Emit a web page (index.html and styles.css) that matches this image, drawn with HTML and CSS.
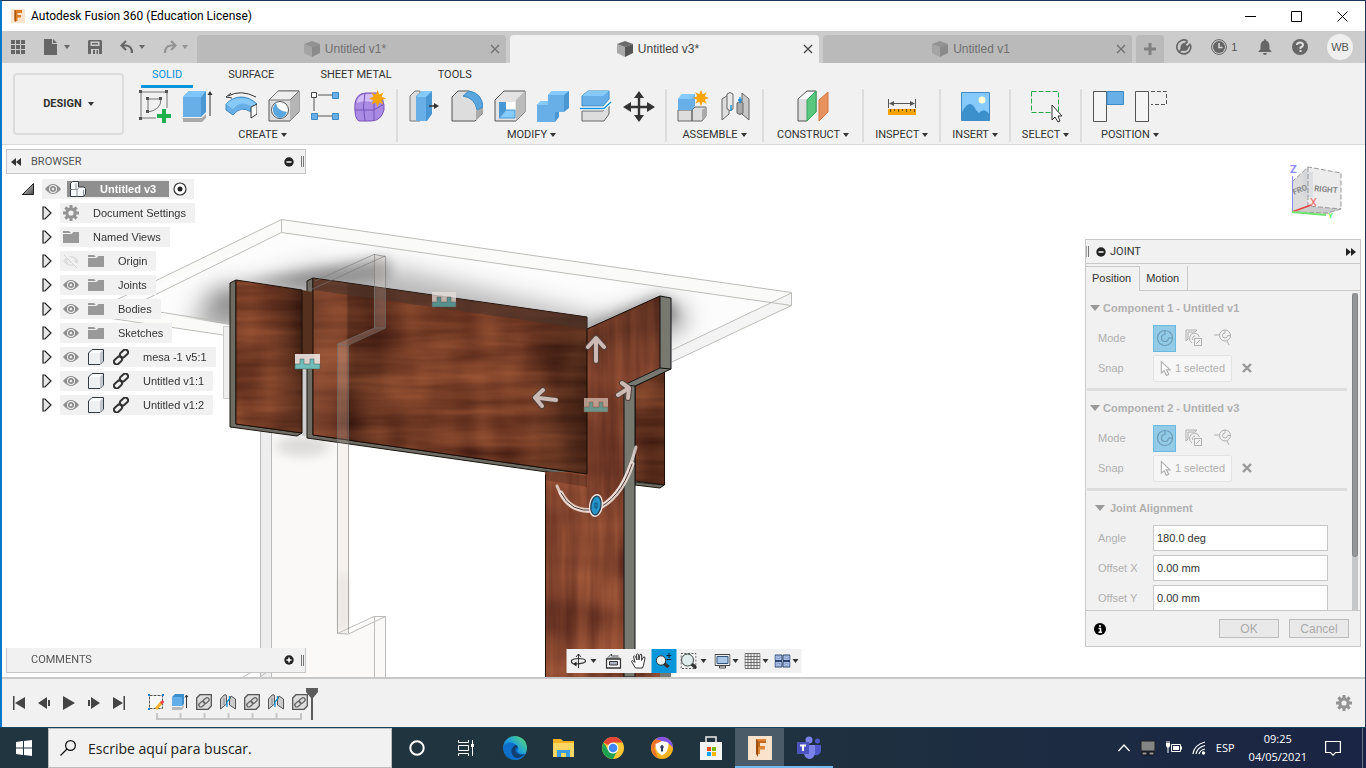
FILE: index.html
```html
<!DOCTYPE html>
<html lang="es">
<head>
<meta charset="utf-8">
<title>Autodesk Fusion 360 (Education License)</title>
<link rel="stylesheet" href="styles.css">
</head>
<body>
<svg class="defs" width="0" height="0" aria-hidden="true">
  <defs>
    <linearGradient id="gTri" x1="0" y1="0" x2="1" y2="1"><stop offset="0" stop-color="#eee"/><stop offset="1" stop-color="#444"/></linearGradient>
    <linearGradient id="gEdge" x1="0" y1="1" x2="1" y2="0"><stop offset="0" stop-color="#0c59a4"/><stop offset=".5" stop-color="#1b9de2"/><stop offset="1" stop-color="#5fe06a"/></linearGradient>
  </defs>
  <symbol id="eye" viewBox="0 0 16 16"><path d="M0 8Q8-2 16 8Q8 18 0 8Z" fill="#8f8f8f"/><circle cx="8" cy="8" r="4" fill="#f1f1f1"/><circle cx="8" cy="8" r="3" fill="#8f8f8f"/><circle cx="8" cy="8" r="1.2" fill="#f1f1f1"/></symbol>
  <symbol id="eyeoff" viewBox="0 0 16 16"><path d="M0 8Q8-2 16 8Q8 18 0 8Z" fill="#ddd"/><circle cx="8" cy="8" r="3.500" fill="#f1f1f1"/><circle cx="8" cy="8" r="2" fill="#ddd"/><path d="M2 1L15 14" stroke="#f1f1f1" stroke-width="3"/><path d="M1 2L14 15" stroke="#d5d5d5"/></symbol>
  <symbol id="folder" viewBox="0 0 16 16"><path d="M0 2H6L8 4H0ZM0 5H8.500L10.500 3H16V14H0Z" fill="#999"/></symbol>
  <symbol id="gear" viewBox="0 0 16 16"><g fill="#949494"><path d="M6.500 0h3v16h-3zM0 6.500h16v3H0z"/><path d="M6.500 0h3v16h-3zM0 6.500h16v3H0z" transform="rotate(45 8 8)"/><circle cx="8" cy="8" r="5.800"/></g><circle cx="8" cy="8" r="2.600" fill="#f1f1f1"/></symbol>
  <symbol id="cube" viewBox="0 0 16 16"><path d="M.5 4L4 .5H15.500V12L12 15.500H.5Z" fill="#fff" stroke="#333b45"/><path d="M12 4L15 1V12L12 15Z" fill="#c5c8cf"/><path d="M1 4H12V15H1Z" fill="#eef0f4"/></symbol>
  <symbol id="comps" viewBox="0 0 16 16"><path d="M.5 2.500L2.500.5H8.500V6H14L15.500 7.500V13L13.500 15.500H.5Z" fill="#f7f8fa" stroke="#333b45"/><path d="M.5 8.500H7V15.500M6 2.500V8M7 9L9 6.500M13.500 9V15" fill="none" stroke="#8f969e"/></symbol>
  <symbol id="link" viewBox="0 0 16 16"><g fill="none" stroke="#333" stroke-width="2"><rect x="6.500" y="1.800" width="9" height="5.400" rx="2.700" transform="rotate(-42 11 4.500)"/><rect x=".5" y="8.800" width="9" height="5.400" rx="2.700" transform="rotate(-42 5 11.500)"/></g></symbol>
  <symbol id="play" viewBox="0 0 10 14"><path d="M1 1V13H3L9 7L3 1Z" fill="#e6e6e6" stroke="#222" stroke-width="1.200"/></symbol>
  <symbol id="doccube" viewBox="0 0 16 16"><path d="M0 3L8 0L16 3L8 6Z" opacity=".85"/><path d="M0 3L8 6V16L0 12Z" opacity=".45"/><path d="M8 6L16 3V12L8 16Z"/></symbol>
  <symbol id="close" viewBox="0 0 10 10"><path d="M1 1L9 9M9 1L1 9" stroke="currentColor" stroke-width="1.300"/></symbol>
  <symbol id="jm1" viewBox="0 0 18 18"><path d="M9 1.500A7.500 7.500 0 1 0 16.500 9H12.500A3.500 3.500 0 1 1 9 5.500ZM9 1.500A7.500 7.500 0 0 1 16.500 9" fill="none" stroke="currentColor" stroke-width="1.200"/></symbol>
  <symbol id="jm2" viewBox="0 0 18 18"><g fill="none" stroke="currentColor"><path d="M1 12V1H12L10 3H3V10Z"/><path d="M9 4A5.500 5.500 0 0 0 7 14M9 4A6 6 0 0 1 14.500 8"/><path d="M10 7A2.500 2.500 0 0 0 8 11"/><rect x="9.500" y="9.500" width="7" height="7"/><path d="M11 15L15 11"/></g></symbol>
  <symbol id="jm3" viewBox="0 0 18 18"><path d="M0 6H5M11 1A5.500 5.500 0 1 0 16.500 6.500H13.500A2.500 2.500 0 1 1 11 4ZM11 1A5.500 5.500 0 0 1 16.500 6.500M13 12L15 16" fill="none" stroke="currentColor"/></symbol>
  <symbol id="cursor" viewBox="0 0 12 18"><path d="M1.500 1.500V14L4.500 11.500L7 16.500L9.500 15.300L7 10.500H11Z" fill="#fff" stroke="currentColor" stroke-width="1.300"/></symbol>
  <symbol id="tlink" viewBox="0 0 16 16"><path d="M.7 4L4 .7H15.300V12L12 15.300H.7Z" fill="#ddd" stroke="#555" stroke-width="1.300"/><g fill="none" stroke="#666" stroke-width="1.300"><rect x="6.500" y="4.500" width="6.500" height="4" rx="2" transform="rotate(-40 10 6)"/><rect x="2.500" y="8" width="6.500" height="4" rx="2" transform="rotate(-40 6 10)"/></g></symbol>
  <symbol id="joint" viewBox="0 0 32 32"><g stroke="#666" fill="#ddd"><path d="M2 9L9 4.500V24L2 30Z"/><path d="M7 4Q10 1 13 4V19Q10 22 7 19Z" fill="#e9e9e9"/><path d="M22 3L29 9V30L22 24Z" fill="#c8c8c8"/><path d="M17 13Q20 10 23 13V23Q20 26 17 23Z" fill="#aaa"/></g><path d="M11 15V21M20 7V13M18 10H22" stroke="#0a8ede" stroke-width="1.300"/></symbol>
  <symbol id="tjoint" viewBox="0 0 16 16"><g stroke="#555" fill="#ccc"><path d="M.5 5L4 1Q6.500 0 6.500 2V10L.5 15Z"/><path d="M9.500 6L11 2L15.500 5V15L9.500 11Z"/></g><path d="M4 4V11" stroke="#888"/><path d="M7 13V8L9.500 5V2" fill="none" stroke="#0a8ede" stroke-width="1.300"/></symbol>
  <symbol id="star" viewBox="0 0 16 16"><path d="M8 0L9.700 4.200L13.700 2.300L11.800 6.300L16 8L11.800 9.700L13.700 13.700L9.700 11.800L8 16L6.300 11.800L2.300 13.700L4.200 9.700L0 8L4.200 6.300L2.300 2.300L6.300 4.200Z" fill="#f7a400"/></symbol>
</svg>

<div class="app">
  <header class="titlebar">
    <svg class="ic14" viewBox="0 0 14 14"><rect width="14" height="14" fill="#fbe3cf"/><path d="M3.500 1H11V4H6.500V6H10V8.500H6.500V12H3.500Z" fill="#dd7c22"/><path d="M3.500 1L5 2V13L3.500 12Z" fill="#a9560e"/></svg>
    <h1>Autodesk Fusion 360 (Education License)</h1>
    <div class="wincontrols">
      <button aria-label="Minimize"><svg class="ic11" viewBox="0 0 11 11"><path d="M0 5.500H11" stroke="#000"/></svg></button>
      <button aria-label="Maximize"><svg class="ic11" viewBox="0 0 11 11"><path d="M.5.5H10.500V10.500H.5Z" fill="none" stroke="#000"/></svg></button>
      <button aria-label="Close"><svg class="ic11" viewBox="0 0 11 11"><path d="M.5.5L10.500 10.500M10.500.5L.5 10.500" stroke="#000"/></svg></button>
    </div>
  </header>

  <nav class="tabbar" aria-label="Documents">
    <div class="quick">
      <button aria-label="Data panel"><svg class="ic14" viewBox="0 0 14 14"><path d="M0 0h4v4H0zM5 0h4v4H5zM10 0h4v4h-4zM0 5h4v4H0zM5 5h4v4H5zM10 5h4v4h-4zM0 10h4v4H0zM5 10h4v4H5zM10 10h4v4h-4z" fill="#666"/></svg></button>
      <button aria-label="File"><svg class="ic16" viewBox="0 0 16 16"><path d="M1 0H9V5H14V16H1ZM10 0L14 4H10Z" fill="#666"/></svg><i class="caret"></i></button>
      <button aria-label="Save"><svg class="ic14" viewBox="0 0 14 14"><path d="M0 1L1 0H13L14 1V14H0Z" fill="#666"/><path d="M2.500 1.500H11.500V6H2.500ZM3 9H11V14H3Z" fill="#ccc"/><path d="M4 3H10V4.500H4ZM5 10H7V14H5ZM8.500 10H10V14H8.500Z" fill="#666"/></svg></button>
      <button aria-label="Undo"><svg class="ic14" viewBox="0 0 14 14"><path d="M6 1L1.500 5.500L6 10M2 5.500H6Q12 6 12 13" fill="none" stroke="#666" stroke-width="2.200"/></svg><i class="caret"></i></button>
      <button aria-label="Redo" class="dim"><svg class="ic14" viewBox="0 0 14 14"><path d="M8 1L12.500 5.500L8 10M12 5.500H8Q2 6 2 13" fill="none" stroke="#666" stroke-width="2.200"/></svg><i class="caret"></i></button>
    </div>
    <div class="doctabs">
      <div class="doctab"><svg class="ic16"><use href="#doccube"/></svg><a href="#t1">Untitled v1*</a><button aria-label="Close tab"><svg class="ic10"><use href="#close"/></svg></button></div>
      <div class="doctab on"><svg class="ic16"><use href="#doccube"/></svg><a href="#t2">Untitled v3*</a><button aria-label="Close tab"><svg class="ic10"><use href="#close"/></svg></button></div>
      <div class="doctab"><svg class="ic16"><use href="#doccube"/></svg><a href="#t3">Untitled v1</a><button aria-label="Close tab"><svg class="ic10"><use href="#close"/></svg></button></div>
      <button class="plus" aria-label="New tab"><svg class="ic14" viewBox="0 0 14 14"><path d="M7 1V13M1 7H13" stroke="#808080" stroke-width="3"/></svg></button>
    </div>
    <div class="account">
      <button aria-label="Extensions"><svg class="ic16" viewBox="0 0 16 16"><path d="M11.500 2A7 7 0 1 0 14.500 6" fill="none" stroke="#666" stroke-width="1.600"/><path d="M4.500 8Q5 4.500 8 4L12.500 8.500Q11.500 12 8 12Q6 12 4.500 10.500Z" fill="#666"/><path d="M8.500 5.500L11.500 2.500M11 8.500L14.500 5M2.500 13.500L6 10" stroke="#666" stroke-width="1.800"/></svg></button>
      <button aria-label="Job status"><svg class="ic16" viewBox="0 0 16 16"><circle cx="8" cy="8" r="7.400" fill="none" stroke="#666"/><circle cx="8" cy="8" r="6" fill="#666"/><path d="M8 4V8.500H11.500" fill="none" stroke="#ddd" stroke-width="1.500"/></svg><span>1</span></button>
      <button aria-label="Notifications"><svg class="ic16" viewBox="0 0 16 16"><path d="M8 0Q9 0 9 1.500Q12.500 2.500 12.500 7V10L14.500 12.500V13H1.500V12.500L3.500 10V7Q3.500 2.500 7 1.500Q7 0 8 0ZM6 14H10Q10 16 8 16Q6 16 6 14Z" fill="#666"/></svg></button>
      <button aria-label="Help"><svg class="ic16" viewBox="0 0 16 16"><circle cx="8" cy="8" r="8" fill="#666"/><path d="M5 6Q5 3.500 8 3.500Q11 3.500 11 6Q11 7.500 8.500 8.500V10M8.500 11V13" fill="none" stroke="#ddd" stroke-width="2"/></svg></button>
      <button class="avatar">WB</button>
    </div>
  </nav>

  <section class="ribbon">
    <button class="workspace">DESIGN <i class="caret"></i></button>
    <div class="ribbon-main">
      <div class="rtabs"><a class="on" href="#solid">SOLID</a><a href="#surface">SURFACE</a><a href="#sheet">SHEET METAL</a><a href="#tools">TOOLS</a></div>
      <div class="groups">
        <div class="group"><div class="icons">
          <button aria-label="Create sketch"><svg viewBox="0 0 32 32"><path d="M2 2H28M2 2V28M28 2V18M2 28H17M9 9H22M9 9V22M22 9Q22 20 9 22" fill="none" stroke="#555" stroke-width=".8"/><path d="M0 0h3v3H0zM26 0h3v3h-3zM0 27h3v3H0zM7 7h3v3H7zM20 7h3v3h-3zM7 20h3v3H7z" fill="#555"/><path d="M23 19h4v5h5v4h-5v5h-4v-5h-5v-4h5z" fill="#22b04c"/></svg></button>
          <button aria-label="Extrude"><svg viewBox="0 0 32 32"><path d="M1 28H20L24 24V28L20 32H1Z" fill="#aaa"/><path d="M1 7L7 1H24V22L19 27H1Z" fill="#4a98d3"/><path d="M1 7L7 1H24L19 7Z" fill="#7fc5fa"/><path d="M1 7H19V27H1Z" fill="#68afe7"/><path d="M28 26V4" stroke="#333"/><path d="M25.500 5L28 1L30.500 5Z" fill="#333"/></svg></button>
          <button aria-label="Revolve"><svg viewBox="0 0 32 32"><path d="M1 14Q8 7 16 7Q25 7 32 14L26 22Q16 15 8 25L1 20Z" fill="#68afe7" stroke="#3e8ac5"/><path d="M1 14Q8 8 16 8Q25 8 31 14L27 17Q16 9 8 19Z" fill="#86c9fb"/><path d="M26 17L32 14V24L26 28Z" fill="#fff" stroke="#333"/><path d="M3 6Q16-1 31 7M6 3L1 7L7 8" fill="none" stroke="#333"/></svg></button>
          <button aria-label="Hole"><svg viewBox="0 0 32 32"><path d="M1 10L10 1H31V22L22 31H1Z" fill="#ddd" stroke="#555"/><path d="M22 10L31 1V22L22 31Z" fill="#b5b5b5"/><path d="M1 10L10 1H31L22 10Z" fill="#eee" stroke="#777"/><circle cx="12" cy="20" r="8.500" fill="#fff" stroke="#555"/><path d="M8 13Q9 21 19 22Q17 28 11 28Q4 25 5 18Q6 15 8 13Z" fill="#5aa6de"/></svg></button>
          <button aria-label="Pattern"><svg viewBox="0 0 32 32"><path d="M7 5H22M3 8V21M7 26H22" stroke="#555"/><path d="M.5 2.500h5v5h-5z" fill="#fff" stroke="#444"/><path d="M21.500 2.500h6v6h-6zM21.500 23.500h6v6h-6zM.5 23.500h6v6h-6z" fill="#68afe7" stroke="#3e8ac5"/></svg></button>
          <button aria-label="Form"><svg viewBox="0 0 32 32"><path d="M1 13Q3 3 12 3H23Q31 9 30 20Q27 31 17 31H5Q0 29 1 13Z" fill="#a98be3" stroke="#7652b8"/><path d="M3 11Q5 4 14 4H22L18 12Q9 10 3 13Z" fill="#d2bdf8"/><path d="M1 20H20L30 14M11 3Q8 17 11 31M20 12V30" fill="none" stroke="#7652b8"/><use href="#star" x="15" y="0" width="17" height="17"/></svg></button>
        </div><button class="glabel">CREATE <i class="caret"></i></button></div>
        <div class="group"><div class="icons">
          <button aria-label="Press pull"><svg viewBox="0 0 32 32"><path d="M2 6L7 1H12V31H2Z" fill="#ddd" stroke="#777"/><path d="M8 6L14 1H24V24L19 31H8Z" fill="#4a98d3"/><path d="M8 7H18V31H8Z" fill="#68afe7"/><path d="M8 7L14 1H24L18 7Z" fill="#86c9fb"/><path d="M21 16H27" stroke="#333" stroke-width="1.500"/><path d="M26 13L31 16L26 19Z" fill="#333"/></svg></button>
          <button aria-label="Fillet"><svg viewBox="0 0 32 32"><path d="M1 7L7 1H18L31 16V24L24 31H1Z" fill="#ddd" stroke="#555"/><path d="M25 21L31 16V24L25 31Z" fill="#aaa"/><path d="M12 6L18 1Q31 3 32 17L26 20Q24 8 12 6Z" fill="#5aa6de" stroke="#3e8ac5"/></svg></button>
          <button aria-label="Shell"><svg viewBox="0 0 32 32"><path d="M1 10L10 1H31V22L22 31H1Z" fill="#e3e3e3" stroke="#555"/><path d="M22 10L31 1V22L22 31Z" fill="#bbb"/><path d="M5 12H21V28H5Z" fill="#fff"/><path d="M5 12H12V21L5 28Z" fill="#4a98d3"/><path d="M12 20H21V28H5Z" fill="#86c9fb" stroke="#4a98d3"/></svg></button>
          <button aria-label="Combine"><svg viewBox="0 0 32 32"><path d="M11 5L15 1H32V18L27 22H22V27L18 32H0V15L4 11H11Z" fill="#4a98d3"/><path d="M11 5H27V22H18V32H0V15H11Z" fill="#68afe7"/><path d="M11 5L15 1H32L27 5ZM0 15L4 11H11V15Z" fill="#86c9fb"/></svg></button>
          <button aria-label="Split body"><svg viewBox="0 0 32 32"><path d="M2 6L8 1H29V9L23 16H2Z" fill="#68afe7" stroke="#3e8ac5"/><path d="M2 6L8 1H29L23 6Z" fill="#86c9fb"/><path d="M2 21H23L29 14V24L24 31H2Z" fill="#ddd" stroke="#666"/><path d="M0 18.500H24L31 12" fill="none" stroke="#fff" stroke-width="3.500"/><path d="M0 18.500H24L31 12" fill="none" stroke="#0a8ede" stroke-width="1.300"/></svg></button>
          <button aria-label="Move"><svg viewBox="0 0 32 32"><path d="M16 5V28M5 17H28" stroke="#333" stroke-width="2.400"/><path d="M11 8L16 1L21 8ZM11 25L16 32L21 25ZM8 12L0 17L8 22ZM24 12L32 17L24 22Z" fill="#333"/></svg></button>
        </div><button class="glabel">MODIFY <i class="caret"></i></button></div>
        <div class="group"><div class="icons">
          <button aria-label="New component"><svg viewBox="0 0 32 32"><path d="M1 20H15V31H1ZM15 20L18 17H29V26L25 31H15Z" fill="#ddd" stroke="#666"/><path d="M25 20L29 17V26L25 31Z" fill="#aaa"/><path d="M1 9L5 4H18V16L15 20H1Z" fill="#68afe7"/><path d="M1 9L5 4H18L15 9Z" fill="#86c9fb"/><use href="#star" x="16" y="0" width="16" height="16"/></svg></button>
          <button aria-label="Joint"><svg><use href="#joint"/></svg></button>
        </div><button class="glabel">ASSEMBLE <i class="caret"></i></button></div>
        <div class="group wide"><div class="icons">
          <button aria-label="Offset plane"><svg viewBox="0 0 32 32"><path d="M1 9L10 1H19V22L10 31H1Z" fill="#ddd" stroke="#555"/><path d="M2 9L10 2H17L10 9Z" fill="#fff"/><path d="M10 10L19 1V22L10 31Z" fill="#5bc67e" stroke="#35a65c"/><path d="M22 10L31 2V22L22 31Z" fill="#e8935f" stroke="#d1763f"/></svg></button>
        </div><button class="glabel">CONSTRUCT <i class="caret"></i></button></div>
        <div class="group text"><div class="icons">
          <button aria-label="Measure"><svg viewBox="0 0 32 32"><path d="M2.500 9V18M29.500 9V18M4 13.500H28" stroke="#555"/><path d="M8 11L3 13.500L8 16ZM24 11L29 13.500L24 16Z" fill="#555"/><path d="M2 19H30V25H2Z" fill="#f9a400"/><path d="M4.500 19v3M8.500 19v2M12.500 19v3M16.500 19v2M20.500 19v3M24.500 19v2M28.500 19v3" stroke="#765000"/></svg></button>
        </div><button class="glabel">INSPECT <i class="caret"></i></button></div>
        <div class="group text"><div class="icons">
          <button aria-label="Insert image"><svg viewBox="0 0 32 32"><path d="M2.500 2.500H30.500V30.500H2.500Z" fill="#86c9fb" stroke="#3e8ac5"/><path d="M3 22Q11 7 17 20L20 23Q25 17 30 24V30H3Z" fill="#3c91cc"/><circle cx="23" cy="10" r="3.500" fill="#fffbd5"/></svg></button>
        </div><button class="glabel">INSERT <i class="caret"></i></button></div>
        <div class="group text"><div class="icons">
          <button aria-label="Select"><svg viewBox="0 0 32 32"><path d="M1.500 1.500H28.500V22.500H1.500Z" fill="none" stroke="#22a84a" stroke-dasharray="5 2"/><path d="M22 15V30L25 27L28 32L30 31L28 26H32Z" fill="#fff" stroke="#333"/></svg></button>
        </div><button class="glabel">SELECT <i class="caret"></i></button></div>
        <div class="group last"><div class="icons">
          <button aria-label="Capture position"><svg viewBox="0 0 32 32"><path d="M1.500 1.500H14.500V31.500H1.500Z" fill="#f5f5f5" stroke="#555"/><path d="M15 1.500H31.500V14.500H15Z" fill="#68afe7" stroke="#3e8ac5"/></svg></button>
          <button aria-label="Revert position"><svg viewBox="0 0 32 32"><path d="M.5 1.500H13.500V31.500H.5Z" fill="#f5f5f5" stroke="#555"/><path d="M16 1.500H31.500V14.500H16" fill="none" stroke="#555" stroke-dasharray="4 2"/></svg></button>
        </div><button class="glabel">POSITION <i class="caret"></i></button></div>
      </div>
    </div>
  </section>

  <main class="canvas">
    <svg class="scene" viewBox="2 145 1363 532" preserveAspectRatio="xMinYMin slice" aria-label="3D model of a table">
      <defs>
        <filter id="woodH" x="0" y="0" width="1" height="1" color-interpolation-filters="sRGB">
          <feTurbulence type="fractalNoise" baseFrequency=".007 .07" numOctaves="3" seed="4" result="a0"/>
          <feColorMatrix in="a0" values="1 0 0 0 0 0 1 0 0 0 0 0 1 0 0 0 0 0 0 1" result="a"/>
          <feTurbulence type="fractalNoise" baseFrequency=".025 .012" numOctaves="2" seed="9" result="b0"/>
          <feColorMatrix in="b0" values="1 0 0 0 0 0 1 0 0 0 0 0 1 0 0 0 0 0 0 1" result="b"/>
          <feComposite in="a" in2="b" operator="arithmetic" k2=".5" k3=".5"/>
          <feColorMatrix values=".65 0 0 0 .14  .42 0 0 0 .03  .26 0 0 0 .02  0 0 0 0 1"/>
          <feComposite in2="SourceAlpha" operator="in"/>
        </filter>
        <filter id="woodV" x="0" y="0" width="1" height="1" color-interpolation-filters="sRGB">
          <feTurbulence type="fractalNoise" baseFrequency=".08 .006" numOctaves="3" seed="7" result="a0"/>
          <feColorMatrix in="a0" values="1 0 0 0 0 0 1 0 0 0 0 0 1 0 0 0 0 0 0 1" result="a"/>
          <feTurbulence type="fractalNoise" baseFrequency=".012 .025" numOctaves="2" seed="3" result="b0"/>
          <feColorMatrix in="b0" values="1 0 0 0 0 0 1 0 0 0 0 0 1 0 0 0 0 0 0 1" result="b"/>
          <feComposite in="a" in2="b" operator="arithmetic" k2=".5" k3=".5"/>
          <feColorMatrix values=".65 0 0 0 .19  .42 0 0 0 .06  .26 0 0 0 .05  0 0 0 0 1"/>
          <feComposite in2="SourceAlpha" operator="in"/>
        </filter>
        <filter id="soft" x="-1" y="-1" width="3" height="3"><feGaussianBlur stdDeviation="12"/></filter>
        <filter id="soft2" x="-1" y="-1" width="3" height="3"><feGaussianBlur stdDeviation="6"/></filter>
        <clipPath id="under"><path d="M281 232L791 306L672 362H640L590 330L230 325L108 305Z"/></clipPath>
        <linearGradient id="shadeB" x1="0" y1="0" x2="1" y2="0"><stop offset="0" stop-color="#b06a4c" stop-opacity=".3"/><stop offset=".12" stop-color="#a05a3c" stop-opacity=".2"/><stop offset=".13" stop-color="#000" stop-opacity=".22"/><stop offset=".35" stop-color="#000" stop-opacity="0"/><stop offset=".75" stop-color="#000" stop-opacity="0"/><stop offset="1" stop-color="#000" stop-opacity=".4"/></linearGradient>
        <linearGradient id="shadeA" x1="0" y1="0" x2="1" y2="0"><stop offset=".5" stop-color="#000" stop-opacity="0"/><stop offset="1" stop-color="#000" stop-opacity=".35"/></linearGradient>
        <linearGradient id="shadeTop" x1="0" y1="0" x2="0" y2="1"><stop offset="0" stop-color="#000" stop-opacity=".3"/><stop offset=".4" stop-color="#000" stop-opacity="0"/></linearGradient>
      </defs>
      <path d="M281 219L791 292V306L672 362L640 380H230V336L108 318V304Z" fill="#fafaf9"/>
      <g clip-path="url(#under)">
        <path d="M281 232L791 306L672 362H640L590 330L230 325L108 305Z" fill="#fcfcfc"/>
        <g filter="url(#soft)">
          <path d="M200 300L310 268L395 268L600 318L670 300V340H190Z" opacity=".27"/>
          <ellipse cx="230" cy="300" rx="22" ry="12" opacity=".4"/><ellipse cx="672" cy="318" rx="16" ry="12" opacity=".35"/>
        </g>
        <g filter="url(#soft2)"><path d="M240 282L300 272L375 258L390 260L388 280L310 286Z" opacity=".28"/><path d="M585 325L660 293L676 305V320L590 335Z" opacity=".25"/></g>
      </g>
      <path d="M791 306L672 362V350L791 293Z" fill="#eee" opacity=".6"/>
      <path d="M108 304L281.500 219.500L791.500 292.500V305.500L672 362M281.500 219.500V232.500L791.500 305.500M281.500 232.500L108 318V304L230 323M108 318L230 336M791.500 293L672 350" fill="none" stroke="#bcbcb8"/>
      <path d="M223.500 326.500H230V398.500H223.500Z" fill="#eee" stroke="#ccc"/>
      <path d="M260 430H338V633L348 633L374 616L385 617V677H260Z" fill="#faf9f8"/>
      <path d="M260 430H271V677H260Z" fill="#eee"/>
      <ellipse cx="303" cy="446" rx="28" ry="10" filter="url(#soft2)" opacity=".12"/>
      <path d="M260.500 430V677M271.500 430V677M374.500 616V677M385.500 616V677M337.500 633.500L374 616.500L385.500 616.500L348.500 634ZM243 677L252 672M260 677L267 672" fill="none" stroke="#bbb"/>
      <path d="M302 366H308V436H302Z" fill="#cfcfcf"/>
      <g stroke="#181410" stroke-width="1">
        <path d="M230 283L236 280V424L302 433L297 436L230 427Z" fill="#6e6c62"/>
        <path d="M307 281L313 278V435L587 474L582 477L307 438Z" fill="#6e6c62"/>
      </g>
      <path d="M302 290L313 292V366L302 365Z" fill="#55301f"/>
      <path d="M236 280L302 290V433L236 424Z" filter="url(#woodH)"/>
      <path d="M236 280L302 290V433L236 424Z" fill="url(#shadeA)" stroke="#1c0f09"/>
      <path d="M545 472H624V677H545Z" filter="url(#woodV)"/>
      <path d="M587 329L660 296V368L624 385V490H587Z" filter="url(#woodV)"/>
      <path d="M587 329L660 296V368L624 385V490H587Z" fill="url(#shadeTop)"/>
      <path d="M635 386L664.500 372V485L635 481Z" filter="url(#woodH)"/>
      <path d="M635 386L664.500 372V485L635 481Z" fill="#000" fill-opacity=".15" stroke="#1c0f09"/>
      <path d="M635 482L664 485L660 488L635 485Z" fill="#6e6c62" stroke="#181410"/>
      <path d="M545 672H660V677H545Z" filter="url(#woodV)"/><path d="M660 672H671V677H660Z" fill="#777870"/>
      <path d="M660 296L671 298V369L635 386V677H624V385L660 368Z" fill="#777870" stroke="#111"/>
      <path d="M660 368L671 369M624 385L635 386" stroke="#111"/>
      <path d="M587 329L660 296M545.500 475V677" stroke="#170c06" fill="none"/>
      <path d="M545 470L587 476V487L545 480Z" opacity=".2"/>
      <path d="M313 278L587 317V474L313 435Z" filter="url(#woodH)"/>
      <path d="M313 278L587 317V474L313 435Z" fill="url(#shadeB)" stroke="#170c06"/>
      <path d="M313 278L587 317V329L313 290Z" fill="#4a342c" opacity=".6"/>
      <path d="M374 254L385 256V328L348 345V633H338V344L374 328Z" fill="#d8c8c0" opacity=".24"/>
      <path d="M315 281L374 254.500L385.500 256.500V328L348.500 345V633M374.500 254V328L337.500 344V633M374.500 328L385 328M338 344L348 345M308 291L385 256" fill="none" stroke="#777" opacity=".6"/>
      <path d="M341 575H346V628H341Z" fill="#888" opacity=".3" filter="url(#soft2)"/>
      <g>
        <path d="M432 292H456V307H432Z" fill="#e5dedb" opacity=".75"/><path d="M432 302H437V297H441V302H447V297H451V302H456V307H432Z" fill="#56918d" stroke="#69524c" stroke-width=".5"/>
        <path d="M295 354H320V369H295Z" fill="#eee6e3" opacity=".9"/><path d="M295 364H300V359H304V364H310V359H314V364H320V369H295Z" fill="#70bdb9" stroke="#43514f" stroke-width=".5"/>
        <path d="M584 398H608V412H584Z" fill="#d6bdb2" opacity=".75"/><path d="M584 407H589V402H593V407H599V402H603V407H608V412H584Z" fill="#6c958a" stroke="#8a4f3a" stroke-width=".5"/>
      </g>
      <g fill="none" stroke-linecap="round" stroke-linejoin="round">
        <path d="M596 361V339M588 347L596 338L604 347M556 400L535 397.500M543 390L535 397.500L542 406M618 395L629 388M622 383L629 388L628 398" stroke="#53403b" stroke-width="6"/>
        <path d="M596 361V339M588 347L596 338L604 347M556 400L535 397.500M543 390L535 397.500L542 406M618 395L629 388M622 383L629 388L628 398" stroke="#ccbab5" stroke-width="4"/>
        <path d="M557 486Q568 514 594 510Q622 500 636 447" stroke="#eee1dc" stroke-width="3" opacity=".8"/>
        <path d="M561 493Q571 513 594 510Q620 500 632 464" stroke="#eee1dc" stroke-width="5" opacity=".85"/>
        <path d="M561 493Q571 513 594 510Q620 500 632 464" stroke="#4f3d36" stroke-width="1"/>
      </g>
      <ellipse cx="596" cy="505.500" rx="5.500" ry="10" transform="rotate(8 596 505)" fill="#2592ca" stroke="#f0e5e1" stroke-width="3"/>
      <ellipse cx="596" cy="505.500" rx="5" ry="9.500" transform="rotate(8 596 505)" fill="#2592ca" stroke="#263d4c" stroke-width="1.300"/>
      <path d="M595 503H597V508H595Z" fill="none" stroke="#12557b"/>
    </svg>

    <aside class="browser">
      <div class="panelhead"><svg class="ic10" viewBox="0 0 10 10"><path d="M5 1V9L0 5ZM10 1V9L5 5Z" fill="#333"/></svg><h2>BROWSER</h2><button aria-label="Collapse browser"><svg class="ic10" viewBox="0 0 10 10"><circle cx="5" cy="5" r="4.700" fill="#222"/><path d="M2.500 5H7.500" stroke="#fff" stroke-width="1.500"/></svg></button><i class="grip"></i></div>
      <ul class="tree">
        <li class="root"><svg class="ic12" viewBox="0 0 12 12"><path d="M.5 11.500L11.500.5V11.500Z" fill="url(#gTri)" stroke="#222"/></svg><div class="node"><svg class="ic16"><use href="#eye"/></svg><span class="rootname"><svg class="ic16"><use href="#comps"/></svg><b>Untitled v3</b></span><svg class="ic14" viewBox="0 0 14 14"><circle cx="7" cy="7" r="6" fill="#fff" stroke="#333" stroke-width="1.200"/><circle cx="7" cy="7" r="2.500" fill="#222"/></svg></div></li>
        <li><svg class="tw"><use href="#play"/></svg><div class="node"><svg class="ic16"><use href="#gear"/></svg><span>Document Settings</span></div></li>
        <li><svg class="tw"><use href="#play"/></svg><div class="node"><svg class="ic16"><use href="#folder"/></svg><span>Named Views</span></div></li>
        <li><svg class="tw"><use href="#play"/></svg><div class="node"><svg class="ic16"><use href="#eyeoff"/></svg><svg class="ic16"><use href="#folder"/></svg><span>Origin</span></div></li>
        <li><svg class="tw"><use href="#play"/></svg><div class="node"><svg class="ic16"><use href="#eye"/></svg><svg class="ic16"><use href="#folder"/></svg><span>Joints</span></div></li>
        <li><svg class="tw"><use href="#play"/></svg><div class="node"><svg class="ic16"><use href="#eye"/></svg><svg class="ic16"><use href="#folder"/></svg><span>Bodies</span></div></li>
        <li><svg class="tw"><use href="#play"/></svg><div class="node"><svg class="ic16"><use href="#eye"/></svg><svg class="ic16"><use href="#folder"/></svg><span>Sketches</span></div></li>
        <li><svg class="tw"><use href="#play"/></svg><div class="node"><svg class="ic16"><use href="#eye"/></svg><svg class="ic16"><use href="#cube"/></svg><svg class="ic16"><use href="#link"/></svg><span>mesa -1 v5:1</span></div></li>
        <li><svg class="tw"><use href="#play"/></svg><div class="node"><svg class="ic16"><use href="#eye"/></svg><svg class="ic16"><use href="#cube"/></svg><svg class="ic16"><use href="#link"/></svg><span>Untitled v1:1</span></div></li>
        <li><svg class="tw"><use href="#play"/></svg><div class="node"><svg class="ic16"><use href="#eye"/></svg><svg class="ic16"><use href="#cube"/></svg><svg class="ic16"><use href="#link"/></svg><span>Untitled v1:2</span></div></li>
      </ul>
      <div class="panelhead comments"><h2>COMMENTS</h2><button aria-label="Expand comments"><svg class="ic10" viewBox="0 0 10 10"><circle cx="5" cy="5" r="4.700" fill="#222"/><path d="M2.500 5H7.500M5 2.500V7.500" stroke="#fff" stroke-width="1.500"/></svg></button><i class="grip"></i></div>
    </aside>

    <svg class="viewcube" viewBox="0 0 56 60" aria-label="View cube">
      <path d="M3 20L19 5V44L3 50Z" fill="#dcdcdc"/><path d="M19 5L52 11V47L19 44Z" fill="#ececec"/><path d="M3 50L19 44L52 47L38 52Z" fill="#ccc"/>
      <path d="M14 10H24V35H14Z" fill="#ccd0d8" opacity=".5"/>
      <path d="M3 20L19 5L52 11V47L38 51L3 50M19 5V44L52 47M3 50L19 44" fill="none" stroke="#999" stroke-dasharray="5 2"/>
      <path d="M3.500 14V50" stroke="#8888ff"/><path d="M3 50L22 43" stroke="#e44" stroke-width="1.500"/><path d="M3 50L37 53" stroke="#6fe36f" stroke-width="2"/>
      <text x="1" y="11" class="vz">Z</text><text x="21" y="44" class="vx">X</text><text x="39" y="56" class="vy">Y</text>
      <text x="25" y="29" class="vr" transform="rotate(5 25 29)">RIGHT</text><text x="5" y="33" class="vf" transform="rotate(-22 5 33)">FRO</text>
    </svg>

    <form class="joint" onsubmit="return false">
      <div class="jhead"><i class="grip"></i><svg class="ic10" viewBox="0 0 10 10"><circle cx="5" cy="5" r="4.700" fill="#222"/><path d="M2.500 5H7.500" stroke="#fff" stroke-width="1.500"/></svg><h2>JOINT</h2><svg class="ic10" viewBox="0 0 10 10"><path d="M0 1V9L5 5ZM5 1V9L10 5Z" fill="#222"/></svg></div>
      <div class="jtabs"><a class="on" href="#pos">Position</a><a href="#motion">Motion</a></div>
      <div class="jbody">
        <div class="jscroll">
          <section>
            <h3><i class="caret"></i>Component 1 - Untitled v1</h3>
            <div class="row"><span class="lab">Mode</span><button class="mode on" aria-label="Simple"><svg class="ic18"><use href="#jm1"/></svg></button><button class="mode" aria-label="Between two faces"><svg class="ic18"><use href="#jm2"/></svg></button><button class="mode" aria-label="Two edge intersection"><svg class="ic18"><use href="#jm3"/></svg></button></div>
            <div class="row"><span class="lab">Snap</span><button class="sel"><svg class="cur"><use href="#cursor"/></svg>1 selected</button><button class="clr" aria-label="Clear"><svg class="ic10" viewBox="0 0 10 10"><path d="M1 1L9 9M9 1L1 9" stroke="#999" stroke-width="2.400"/></svg></button></div>
          </section>
          <section>
            <h3><i class="caret"></i>Component 2 - Untitled v3</h3>
            <div class="row"><span class="lab">Mode</span><button class="mode on" aria-label="Simple"><svg class="ic18"><use href="#jm1"/></svg></button><button class="mode" aria-label="Between two faces"><svg class="ic18"><use href="#jm2"/></svg></button><button class="mode" aria-label="Two edge intersection"><svg class="ic18"><use href="#jm3"/></svg></button></div>
            <div class="row"><span class="lab">Snap</span><button class="sel"><svg class="cur"><use href="#cursor"/></svg>1 selected</button><button class="clr" aria-label="Clear"><svg class="ic10" viewBox="0 0 10 10"><path d="M1 1L9 9M9 1L1 9" stroke="#999" stroke-width="2.400"/></svg></button></div>
          </section>
          <section class="align">
            <h3><i class="caret"></i>Joint Alignment</h3>
            <div class="row"><label class="lab" for="angle">Angle</label><input id="angle" value="180.0 deg"></div>
            <div class="row"><label class="lab" for="ox">Offset X</label><input id="ox" value="0.00 mm"></div>
            <div class="row"><label class="lab" for="oy">Offset Y</label><input id="oy" value="0.00 mm"></div>
          </section>
        </div>
        <div class="track"><div class="thumb"></div></div>
      </div>
      <div class="jfoot"><svg class="ic12" viewBox="0 0 12 12"><circle cx="6" cy="6" r="6"/><path d="M6 2V4M4.500 5.500H6.500V9M4.500 9.300H8" stroke="#fff" stroke-width="1.600" fill="none"/></svg><button disabled>OK</button><button disabled>Cancel</button></div>
    </form>

    <div class="navbar">
      <button aria-label="Orbit"><svg class="ic16" viewBox="0 0 16 16"><path d="M8 1V15M5.500 4L8 1L10.500 4" stroke="#333" fill="none"/><path d="M3 11Q0 9 1 7.500Q3 5.500 8 5.500Q15 5.500 15 8Q15 10.500 5 11" fill="none" stroke="#333" stroke-width="1.200"/><path d="M6 8.500V13.500L2.500 11Z" fill="#222"/></svg><i class="caret"></i></button>
      <button aria-label="Look at"><svg class="ic16" viewBox="0 0 16 16"><path d="M1 6H15V15H1Z" fill="#fff" stroke="#333" stroke-width="1.300"/><path d="M4 8.500H12V12H4Z" fill="#aeb7c4" stroke="#333"/><path d="M2 5L6 1V3H13M4 5H14" fill="none" stroke="#444"/></svg></button>
      <button aria-label="Pan"><svg class="ic16" viewBox="0 0 16 16"><path d="M5 15L1 8.500Q1 7 3 8L4.500 9.500L3 3.500Q4 2 5 3.500L6.500 7L6 1.500Q7 .5 8 1.500L8.500 7L9.500 1.500Q11 .5 11.300 2L11 7.500L13 4Q14.500 3.500 14.500 5L13 12L12 15Z" fill="#fff" stroke="#333"/></svg></button>
      <button class="on" aria-label="Zoom"><svg class="ic16" viewBox="0 0 16 16"><path d="M8 10L13 14" stroke="#333" stroke-width="3.500"/><circle cx="5.500" cy="7.500" r="4.700" fill="#e8f0f2" stroke="#333"/><path d="M13.500 0V5M11 2.500H16M11 6.500H16" stroke="#123"/></svg></button>
      <button aria-label="Fit"><svg class="ic16" viewBox="0 0 16 16"><path d="M.5.5H15.500V15.500H.5Z" fill="none" stroke="#555" stroke-dasharray="2 1.500"/><path d="M11 11L16 15" stroke="#333" stroke-width="3.500"/><circle cx="7" cy="7" r="6" fill="#dfeceb" stroke="#444"/></svg><i class="caret"></i></button>
      <button class="tight" aria-label="Display settings"><svg class="ic16" viewBox="0 0 16 16"><path d="M.5 1.500H15.500V12.500H.5Z" fill="#eee" stroke="#444"/><path d="M2.500 3.500H13.500V10.500H2.500Z" fill="#aac6e6" stroke="#35547a"/><path d="M5 13H11V15H5Z" fill="#fff" stroke="#444"/></svg><i class="caret"></i></button>
      <button class="tight" aria-label="Grid"><svg class="ic16" viewBox="0 0 16 16"><path d="M.5.5H15.500V15.500H.5ZM3.500 0V16M6.500 0V16M9.500 0V16M12.500 0V16M0 3.500H16M0 6.500H16M0 9.500H16M0 12.500H16" fill="#eee" stroke="#555" stroke-width=".8"/></svg><i class="caret"></i></button>
      <button class="tight" aria-label="Viewports"><svg class="ic16" viewBox="0 0 16 16"><path d="M.5 2H7.500V7.500H.5ZM8.500 2H15.500V7.500H8.500ZM.5 8.500H7.500V14H.5ZM8.500 8.500H15.500V14H8.500Z" fill="#aec3ea" stroke="#2e466f"/><path d="M2.500 4H5.500V5.500H2.500ZM10.500 4H13.500V5.500H10.500ZM2.500 10.500H5.500V12H2.500ZM10.500 10.500H13.500V12H10.500Z" fill="#eaf0fa" stroke="#5c7ab5" stroke-width=".6"/></svg><i class="caret"></i></button>
    </div>
  </main>

  <footer class="timeline">
    <div class="player">
      <button aria-label="Start"><svg class="ic14" viewBox="0 0 14 14"><path d="M1 0H2.500V14H1ZM13 1V13L3 7Z" fill="#444"/></svg></button>
      <button aria-label="Step back"><svg class="ic14" viewBox="0 0 14 14"><path d="M10 1V13L1 7ZM11 4H13V10H11Z" fill="#444"/></svg></button>
      <button aria-label="Play"><svg class="ic14" viewBox="0 0 14 14"><path d="M1 0V14L13 7Z" fill="#444"/></svg></button>
      <button aria-label="Step forward"><svg class="ic14" viewBox="0 0 14 14"><path d="M4 1V13L13 7ZM1 4H3V10H1Z" fill="#444"/></svg></button>
      <button aria-label="End"><svg class="ic14" viewBox="0 0 14 14"><path d="M11.500 0H13V14H11.500ZM1 1V13L11 7Z" fill="#444"/></svg></button>
    </div>
    <div class="history">
      <div class="features">
        <button aria-label="Sketch"><svg class="ic16" viewBox="0 0 16 16"><path d="M1.500 1.500H14.500V14.500H1.500Z" fill="#f8f8f8" stroke="#555" stroke-dasharray="3 1"/><path d="M0 0h2v2H0zM14 0h2v2h-2zM0 14h2v2H0z" fill="#1687dc"/><path d="M8 15L14 8" stroke="#f6b42c" stroke-width="3"/><path d="M13 9.500L15.500 7" stroke="#e2474b" stroke-width="3"/></svg></button>
        <button aria-label="Extrude"><svg class="ic16" viewBox="0 0 16 16"><path d="M0 13H10L12 11V13L10 16H0Z" fill="#bbb"/><path d="M0 3L3 0H12V10L10 12H0Z" fill="#3c8fcf"/><path d="M0 3H10V12H0Z" fill="#61aeea"/><path d="M14.500 14V2M13 3.500L14.500 1L16 3.500" stroke="#333" fill="none"/></svg></button>
        <button aria-label="Linked component"><svg class="ic16"><use href="#tlink"/></svg></button>
        <button aria-label="Joint"><svg class="ic16"><use href="#tjoint"/></svg></button>
        <button aria-label="Linked component"><svg class="ic16"><use href="#tlink"/></svg></button>
        <button aria-label="Joint"><svg class="ic16"><use href="#tjoint"/></svg></button>
        <button aria-label="Linked component"><svg class="ic16"><use href="#tlink"/></svg></button>
      </div>
      <svg class="bracket" viewBox="0 0 146 8"><path d="M1 0V6H145V0M24.500 0V6M48.500 0V6M72.500 0V6M96.500 0V6M120.500 0V6" fill="none" stroke="#c6c6c6" stroke-width="2"/></svg>
      <svg class="marker" viewBox="0 0 12 32"><path d="M0 0H12V4L7 10V32H5V10L0 4Z" fill="#5c5c5c"/></svg>
    </div>
    <button class="settings" aria-label="Timeline settings"><svg class="ic16"><use href="#gear"/></svg></button>
  </footer>
</div>

<div class="taskbar">
  <button class="start" aria-label="Inicio"><svg class="ic16" viewBox="0 0 16 16"><path d="M0 2L7 1V7.500H0ZM8 .9L16 0V7.500H8ZM0 8.500H7V15L0 14ZM8 8.500H16V16L8 15.100Z" fill="#fff"/></svg></button>
  <label class="search"><svg class="ic16" viewBox="0 0 16 16"><circle cx="10.500" cy="5.500" r="4.900" fill="none" stroke="#111" stroke-width="1.200"/><path d="M7 9L.5 15.500" stroke="#111" stroke-width="1.200"/></svg><input placeholder="Escribe aquí para buscar." aria-label="Escribe aquí para buscar."></label>
  <div class="apps">
    <button aria-label="Cortana"><svg class="ic16" viewBox="0 0 16 16"><circle cx="8" cy="8" r="6.700" fill="none" stroke="#fff" stroke-width="2"/></svg></button>
    <button aria-label="Vista de tareas"><svg class="ic16" viewBox="0 0 16 16"><path d="M.5 0V2.500H10.500V0M.5 5.500H10.500V10.500H.5ZM.5 16V13.500H10.500V16M14.500 0V16" fill="none" stroke="#fff"/><path d="M13 4H16V7H13Z" fill="#fff"/></svg></button>
    <button aria-label="Edge"><svg class="ic24" viewBox="0 0 24 24"><circle cx="12" cy="12" r="12" fill="url(#gEdge)"/><path d="M0 11Q4 5 10 7Q15 9 15.500 13Q13 15 16 17Q20 19 23 17Q20 22 15 23.500Q3 25 0 11Z" fill="#0d6fc9"/><path d="M12 9Q7 13 9 18Q13 26 22 18Q16 20 13 16Q11 13 15 11Q14 9 12 9Z" fill="#123f70"/></svg></button>
    <button aria-label="Explorador de archivos"><svg class="ic24" viewBox="0 0 24 24"><path d="M1 3H9L11 5H22V21H1Z" fill="#f3b320"/><path d="M1 7H22V21H1Z" fill="#fdd663"/><path d="M5 21V14H18V21H14V17H9V21Z" fill="#3d9be0"/></svg></button>
    <button aria-label="Chrome"><svg class="ic24" viewBox="0 0 24 24"><circle cx="12" cy="12" r="11" fill="#fcc934"/><path d="M12 12L2.500 6.500A11 11 0 0 1 21.500 6.500H12Z" fill="#e84436"/><path d="M2.500 6.500A11 11 0 0 0 12 23L16.500 14.500L12 12L7.500 14.500Z" fill="#1fa152"/><circle cx="12" cy="12" r="5.500" fill="#fff"/><circle cx="12" cy="12" r="4.300" fill="#4285f4"/></svg></button>
    <button aria-label="Navegador privado"><svg class="ic24" viewBox="0 0 24 24"><circle cx="12" cy="12" r="11" fill="#f6b21c"/><path d="M5 3.500A11 11 0 0 1 23 12Q20 7 13 6Z" fill="#8352e8"/><path d="M5 3.500A11 11 0 0 0 8 22L4 12L13 6Q10 3 5 3.500Z" fill="#f0742b"/><path d="M12 5Q18 6 18.500 7Q19 16 12 19.500Q5 16 5.500 8Q8 7 12 5Z" fill="#fff"/><path d="M12 9A2 2 0 0 1 13 12.500V15.500H11V12.500A2 2 0 0 1 12 9Z" fill="#2f3a58"/></svg></button>
    <button aria-label="Microsoft Store"><svg class="ic24" viewBox="0 0 24 24"><path d="M7 6V1H17V6" fill="none" stroke="#eee" stroke-width="1.500"/><path d="M1 6H23V24H1Z" fill="#f5f5f5"/><path d="M8 11H12V15H8Z" fill="#f25022"/><path d="M13 11H17V15H13Z" fill="#7fba00"/><path d="M8 16H12V20H8Z" fill="#00a4ef"/><path d="M13 16H17V20H13Z" fill="#ffb900"/></svg></button>
    <button class="open current" aria-label="Fusion 360"><svg class="ic24" viewBox="0 0 24 24"><path d="M0 0H24V24H0Z" fill="#fbe2cc"/><path d="M8 3H18V7H12V10H17V13.500H12V18H8Z" fill="#df8535"/><path d="M8 3L10 5V21L8 18Z" fill="#9a4d10"/><path d="M10 5H18V7H12V11H10Z" fill="#c2681c"/></svg></button>
    <button class="open" aria-label="Teams"><svg class="ic24" viewBox="0 0 24 24"><circle cx="12" cy="4" r="3.500" fill="#7b83eb"/><circle cx="20.500" cy="5" r="2.500" fill="#5059c9"/><path d="M16 9H24V15Q23 20 17 19Z" fill="#5059c9"/><path d="M7 9H18V17Q17 23 12 23Q8 22 7 18Z" fill="#7b83eb"/><path d="M0 6H12V18H0Z" fill="#4b53bc"/><path d="M3 9.500H9M6 9.500V15" stroke="#fff" stroke-width="2"/></svg></button>
  </div>
  <div class="tray">
    <svg class="ic12" viewBox="0 0 12 12"><path d="M.5 9L6 3L11.500 9" fill="none" stroke="#fff" stroke-width="1.300"/></svg>
    <svg class="ic16" viewBox="0 0 16 16"><path d="M1 1H15V11H1Z" fill="#858585" stroke="#222"/><path d="M2 12H7V15H2ZM9 12H14V15H9Z" fill="#999" stroke="#111"/></svg>
    <svg class="ic16" viewBox="0 0 16 16"><path d="M5.500 4.500H14.500V11.500H5.500Z" fill="none" stroke="#fff"/><path d="M7 6H13V10H7ZM15 6.500H16V9.500H15ZM0 3H4V6L3 7.500H1L0 6ZM.5 1H1.500V3H.5ZM2.500 1H3.500V3H2.500ZM1.500 7H2.500V13H1.500Z" fill="#fff"/></svg>
    <svg class="ic14" viewBox="0 0 14 14"><g fill="none" stroke="#fff" stroke-width="1.200"><path d="M1 13Q2 4 13 1"/><path d="M4 13Q5 6.500 13 4.500" /><path d="M7 13Q8 9 13 8"/></g><circle cx="11.500" cy="12" r="1.700" fill="#fff"/></svg>
    <span class="lang">ESP</span>
    <time class="clock">09:25<br>04/05/2021</time>
    <svg class="ic16 note" viewBox="0 0 16 16"><path d="M.6 1.500H15.400V12.500H10.500L8 15.200L5.500 12.500H.6Z" fill="none" stroke="#fff" stroke-width="1.200"/></svg>
  </div>
</div>
</body>
</html>
```
FILE: styles.css
```css
* { box-sizing: border-box; }
body {
  margin: 0;
  height: 100vh;
  display: flex;
  flex-direction: column;
  overflow: hidden;
  font: 11px/16px "Liberation Sans", Arial, sans-serif;
  color: #333;
}
button, input { font: inherit; color: inherit; margin: 0; padding: 0; border: 0; background: none; }
button { display: inline-flex; align-items: center; justify-content: center; }
a { color: inherit; text-decoration: none; }
h1, h2, h3, ul { margin: 0; padding: 0; font: inherit; }
svg { display: block; flex: none; }
.defs { position: absolute; }
.ic10 { width: 10px; height: 10px; }
.ic11 { width: 11px; height: 11px; }
.ic12 { width: 12px; height: 12px; }
.ic14 { width: 14px; height: 14px; }
.ic16 { width: 16px; height: 16px; }
.ic18 { width: 18px; height: 18px; }
.ic24 { width: 24px; height: 24px; }
.caret { border: 3px solid transparent; border-top: 4px solid currentColor; border-bottom: 0; flex: none; }

.app {
  flex: 1;
  min-height: 0;
  display: flex;
  flex-direction: column;
  border: solid #1d3658;
  border-width: 1px 1px 0 2px;
  border-left-color: #0878c8;
}

.titlebar { height: 30px; display: flex; align-items: center; padding-left: 9px; background: #fff; color: #000; flex: none; }
.titlebar h1 { margin-left: 6px; font: 12px/16px Roboto, "Noto Sans", sans-serif; flex: 1; }
.wincontrols { display: flex; }
.wincontrols button { width: 46px; height: 30px; }

.tabbar { height: 32px; display: flex; background: #ccc; flex: none; }
.quick { width: 195px; display: flex; align-items: center; gap: 18px; padding-left: 9px; color: #666; flex: none; }
.quick button { gap: 5px; }
.quick .dim { opacity: .55; }
.doctabs { flex: 1; display: flex; align-items: flex-end; gap: 4px; min-width: 0; }
.doctab { flex: 1; height: 28px; display: flex; align-items: center; padding: 0 6px 0 8px; gap: 5px; border-radius: 4px 4px 0 0; background: #bababa; color: #707070; fill: #8a8a8a; font-size: 12px; }
.doctab svg:first-child { margin-left: auto; }
.doctab button { margin-left: auto; width: 10px; }
.doctab button svg:first-child { margin: 0; }
.doctab.on { background: #f1f1f1; color: #444; fill: #555; }
.plus { width: 28px; height: 28px; background: #bababa; border-radius: 4px 4px 0 0; }
.account { width: 201px; display: flex; align-items: center; justify-content: space-between; padding: 0 12px; color: #555; flex: none; }
.account button { gap: 4px; }
.account .avatar { width: 26px; height: 26px; border-radius: 50%; background: #efefef; }

.ribbon { display: flex; height: 82px; background: #f1f1f1; border-bottom: 1px solid #d8d8d8; flex: none; padding-left: 11px; font-family: Roboto, "Liberation Sans", sans-serif; }
.workspace { width: 111px; height: 62px; margin-top: 10px; border: 2px solid #ddd; border-radius: 4px; gap: 6px; font-weight: bold; flex: none; }
.ribbon-main { margin-left: 5px; flex: 1; min-width: 0; }
.rtabs { display: flex; height: 25px; padding-left: 12px; gap: 24px; }
.rtabs a { padding: 4px 11px 0; }
.rtabs .on { color: #0a8fd6; border-bottom: 3px solid #0a96da; }
.groups { display: flex; padding-top: 1px; }
.group { display: flex; flex-direction: column; align-items: center; padding: 0 10px; border-right: 2px solid #ddd; height: 53px; }
.group.text { padding: 0 11px; }
.group.wide { padding: 0 13px; }
.group.last { border: 0; }
.icons { display: flex; gap: 11px; }
.icons svg { width: 32px; height: 34px; }
.glabel { gap: 3px; height: 18px; margin-top: 4px; }

.canvas { position: relative; flex: 1; min-height: 0; overflow: hidden; background: #fff; }
.scene { position: absolute; left: 0; top: 0; width: 100%; height: 100%; }
.browser { position: absolute; left: 4px; top: 4px; bottom: 4px; width: 300px; display: flex; flex-direction: column; }
.panelhead { display: flex; align-items: center; height: 25px; flex: none; padding: 0 1px 0 4px; border: 1px solid #c6c6c6; background: #f1f1f1; color: #555; font-family: Roboto, sans-serif; }
.panelhead h2 { flex: 1; margin-left: 10px; }
.panelhead button { margin-right: 7px; }
.grip { width: 3px; height: 11px; border: solid #777; border-width: 0 1px; flex: none; }
.comments { margin-top: auto; border-top: 0; }
.comments h2 { margin-left: 20px; }
.tree { list-style: none; padding: 5px 0 0 36px; }
.tree li { display: flex; align-items: center; height: 20px; margin-bottom: 4px; }
.tree .root { margin-left: -20px; }
.root .node { margin-left: 8px; padding: 0 7px 0 3px; gap: 6px; }
.tw { width: 10px; height: 14px; }
.node { display: flex; align-items: center; height: 20px; gap: 9px; margin-left: 8px; padding: 0 9px 0 3px; background: #f1f1f1; }
li:not(.root) .node > span { margin-left: 5px; }
.rootname { display: flex; align-items: center; width: 102px; height: 16px; padding-left: 3px; gap: 14px; background: #8f8f8f; color: #fff; }
.node svg:last-child { margin-left: -2px; }

.viewcube { position: absolute; right: 20px; top: 17px; width: 56px; height: 60px; }
.viewcube text { font: bold 8px Roboto, sans-serif; fill: #888; }
.viewcube .vz { fill: #8c8cff; font-size: 11px; }
.viewcube .vx { fill: #f06a6a; font-weight: normal; font-size: 11px; }
.viewcube .vy { fill: #5ff05f; }

.joint { position: absolute; right: 4px; top: 94px; width: 276px; border: 1px solid #c8c8c8; background: #f1f1f1; }
.jhead { display: flex; align-items: center; height: 24px; border-bottom: 1px solid #c8c8c8; padding-right: 4px; }
.jhead .ic10 { margin-left: 7px; }
.jhead .grip { border-left-color: #aaa; }
.jhead h2 { flex: 1; margin-left: 4px; font-family: Roboto, sans-serif; }
.jtabs { display: flex; height: 27px; padding-top: 2px; border-bottom: 1px solid #c8c8c8; }
.jtabs a { height: 24px; padding: 4px 8px 0 6px; border-right: 1px solid #c8c8c8; }
.jtabs a.on { height: 25px; padding-top: 3px; border-top: 1px solid #c8c8c8; background: #f1f1f1; }
.jbody { display: flex; height: 319px; overflow: hidden; color: #b0b0b0; padding-left: 1px; }
.jscroll { flex: 1; }
.jscroll section { padding: 2px 0 5px; border-bottom: 3px solid #ddd; }
.jscroll h3 { display: flex; align-items: center; gap: 3px; height: 30px; padding-left: 3px; font-weight: bold; }
.jscroll .align { border: 0; }
.align h3 { padding-left: 8px; gap: 5px; }
.jscroll h3 .caret { border-width: 6px 5px 0; color: #999; }
.row { display: flex; align-items: center; height: 30px; padding-left: 11px; }
.lab { width: 55px; }
.mode { width: 23px; height: 27px; margin-right: 6px; }
.mode.on { background: #91cbe8; border: 1px solid #6cb9df; color: #6d9cb3; }
.sel { width: 79px; height: 27px; gap: 4px; border: 1px solid #e3e3e3; border-radius: 2px; background: #f6f6f6; }
.cur { width: 11px; height: 17px; }
.clr { margin-left: 10px; }
.row input { width: 175px; height: 26px; border: 1px solid #c8c8c8; padding-left: 3px; background: #fff; color: #333; }
.track { width: 6px; margin: 2px 2px 0 5px; background: #c5c7c9; }
.thumb { height: 264px; border-radius: 3px; background: #949698; border: 1px solid #828486; }
.jfoot { display: flex; align-items: center; justify-content: flex-end; gap: 10px; height: 36px; border-top: 1px solid #c8c8c8; padding: 0 11px 0 8px; }
.jfoot svg { margin-right: auto; }
.jfoot button { width: 60px; height: 19px; border: 1px solid #bcbcbc; background: #e9e9e9; color: #aaa; font-size: 12px; }

.navbar { position: absolute; left: 50%; bottom: 4px; transform: translateX(-50%); display: flex; height: 24px; background: #f1f1f1; }
.navbar button { padding: 0 5px 0 4px; gap: 4px; }
.navbar .tight { padding: 0 3px; gap: 2px; }
.navbar .on { background: #0a96da; }

.timeline { display: flex; height: 50px; padding: 0 13px 0 10px; border-top: 2px solid #c8c8c8; background: #f1f1f1; flex: none; }
.player { display: flex; gap: 11px; height: 48px; align-items: center; }
.history { display: grid; grid-template-columns: auto auto; margin-left: 22px; padding-top: 9px; align-content: start; }
.features { display: flex; padding-top: 6px; gap: 8px; }
.bracket { width: 146px; height: 8px; grid-row: 2; grid-column: 1; margin: 3px 0 0 8px; }
.marker { width: 12px; height: 32px; grid-row: 1 / 3; grid-column: 2; margin-left: -2px; }
.settings { margin-left: auto; }

.taskbar { display: flex; height: 41px; flex: none; background: linear-gradient(90deg, #20353f, #20343f 50%, #1a2444); border-top: 1px solid #15465e; color: #fff; font-family: "Open Sans", sans-serif; }
.start { width: 48px; }
.search { display: flex; align-items: center; width: 344px; padding: 0 12px 0 11px; gap: 12px; background: #f1f1f1; border: 1px solid #bbb; color: #222; }
.search input { flex: 1; min-width: 0; font-size: 14px; height: 30px; }
.search input::placeholder { color: #222; opacity: 1; }
.apps { display: flex; }
.apps button { width: 49px; border-bottom: 2px solid transparent; padding-top: 2px; }
.apps .open { border-color: #76b9ed; }
.apps .current { background: #4b5b67; }
.tray { display: flex; align-items: center; margin-left: auto; margin-right: 3px; padding-right: 21px; gap: 10px; border-right: 1px solid #6b738a; }
.clock { text-align: center; line-height: 18px; margin-left: 4px; }
.note { margin-left: 8px; }
```
